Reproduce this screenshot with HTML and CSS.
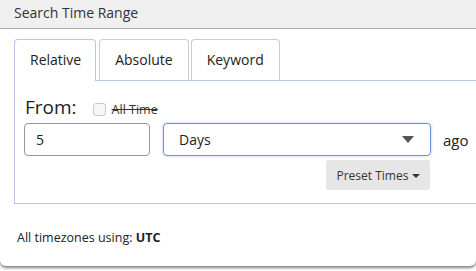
FILE: index.html
```html
<!DOCTYPE html>
<html lang="en">
<head>
    <meta charset="UTF-8">
    <title>Search Time Range</title>
    <link rel="stylesheet" href="styles.css">
</head>
<body>
    <div class="dialog">
        <div class="dialog-header">Search Time Range</div>
        <div class="dialog-body">
            <div class="tabs">
                <div class="tab active">Relative</div>
                <div class="tab">Absolute</div>
                <div class="tab keyword">Keyword</div>
            </div>
            <div class="tab-content">
                <div class="from-row">
                    <span class="from-label">From:</span>
                    <label class="all-time"><span class="checkbox"></span><s>All Time</s></label>
                </div>
                <div class="range-row">
                    <input type="text" class="amount" value="5">
                    <div class="unit-select">
                        <span>Days</span>
                        <span class="select-arrow"></span>
                    </div>
                    <span class="ago">ago</span>
                </div>
                <div class="preset-row">
                    <button class="preset-btn">Preset Times <span class="caret"></span></button>
                </div>
            </div>
            <p class="tz-note">All timezones using: <strong>UTC</strong></p>
        </div>
    </div>
</body>
</html>
```

FILE: styles.css
```css
html, body {
    margin: 0;
    padding: 0;
    overflow: hidden;
    background: #fff;
}
body {
    font-family: "Open Sans", "Liberation Sans", sans-serif;
    color: #222;
    width: 476px;
    height: 271px;
}
.dialog {
    width: 100%;
    height: 266px;
    overflow: hidden;
    background: #fff;
    border-radius: 0 0 6px 6px;
    box-shadow: 0 2px 3px rgba(0, 0, 0, 0.5);
}
.dialog-header {
    height: 28px;
    line-height: 26px;
    padding-left: 14px;
    background: #f0f0f0;
    border-bottom: 1px solid #a8a8a8;
    font-size: 14px;
    color: #333;
}
.dialog-body {
    padding: 10px 0 0 14px;
}
.tabs {
    display: flex;
    gap: 3px;
    position: relative;
    z-index: 1;
}
.tab {
    height: 40px;
    line-height: 40px;
    padding: 0 15px;
    font-size: 14px;
    color: #222;
    border: 1px solid #ccc;
    border-bottom: none;
    border-radius: 4px 4px 0 0;
    background: #fff;
}
.tab.active {
    border-color: #b9c7e6;
    height: 41px;
    margin-bottom: -1px;
    padding: 0 14px 0 15px;
}
.tab.keyword {
    margin-left: -1px;
}
.tab-content {
    border: 1px solid #b9c7e6;
    width: 520px;
    height: 122px;
    padding: 0 10px;
}
.from-row {
    display: flex;
    align-items: baseline;
    height: 42px;
    padding-top: 16px;
    box-sizing: border-box;
}
.from-label {
    font-size: 19px;
    line-height: 20px;
    color: #222;
    margin-right: 16px;
}
.all-time {
    display: flex;
    align-items: baseline;
    font-size: 12.5px;
    line-height: 16px;
    color: #333;
}
.checkbox {
    width: 11px;
    height: 11px;
    border: 1px solid #c8c8c8;
    border-radius: 3px;
    background: #f7f7f7;
    margin-right: 6px;
    align-self: center;
    position: relative;
    top: -1px;
}
.all-time s {
    text-decoration-thickness: 1px;
}
.range-row {
    display: flex;
    align-items: center;
}
.amount {
    box-sizing: border-box;
    width: 126px;
    height: 33px;
    border: 1px solid #999;
    border-radius: 4px;
    padding: 0 11px;
    font-family: inherit;
    font-size: 14px;
    color: #222;
    margin-left: -1px;
}
.unit-select {
    box-sizing: border-box;
    width: 268px;
    height: 33px;
    margin-left: 13px;
    border: 1px solid #6e8fd9;
    border-radius: 4px;
    box-shadow: 0 0 3px rgba(110, 143, 217, 0.5);
    display: flex;
    align-items: center;
    justify-content: space-between;
    padding: 0 16px 0 15px;
    font-size: 14px;
    color: #222;
}
.select-arrow {
    width: 0;
    height: 0;
    border-left: 6px solid transparent;
    border-right: 6px solid transparent;
    border-top: 7px solid #555;
}
.ago {
    font-size: 15px;
    margin-left: 12px;
    color: #222;
}
.preset-row {
    display: flex;
    padding-left: 301px;
    margin-top: 4px;
}
.preset-btn {
    width: 104px;
    height: 30px;
    border: none;
    border-radius: 3px;
    background: #e6e6e6;
    font-family: inherit;
    font-size: 12px;
    color: #333;
    padding: 0;
}
.caret {
    display: inline-block;
    vertical-align: middle;
    width: 0;
    height: 0;
    border-left: 4px solid transparent;
    border-right: 4px solid transparent;
    border-top: 4px solid #333;
}
.tz-note {
    margin: 25px 0 0 3px;
    font-size: 12.5px;
    color: #222;
}
.tz-note strong {
    font-weight: 700;
}
```
